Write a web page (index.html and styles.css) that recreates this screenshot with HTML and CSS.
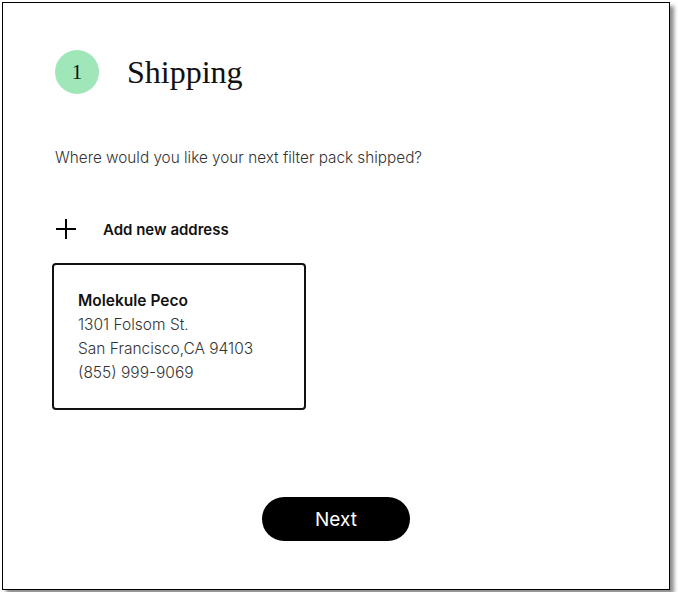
FILE: index.html
```html
<!DOCTYPE html>
<html lang="en">
<head>
<meta charset="utf-8">
<title>Shipping</title>
<link rel="stylesheet" href="styles.css">
</head>
<body>
<div class="frame">
  <div class="header">
    <div class="step">1</div>
    <h1 class="title">Shipping</h1>
  </div>
  <p class="prompt">Where would you like your next filter pack shipped?</p>
  <button class="add" type="button">
    <svg class="plus" width="22" height="22" viewBox="0 0 22 22" aria-hidden="true">
      <path d="M11 1V21M1 11H21" stroke="#000" stroke-width="2" fill="none"/>
    </svg>
    <span>Add new address</span>
  </button>
  <div class="card">
    <div class="name">Molekule Peco</div>
    <div class="line">1301 Folsom St.</div>
    <div class="line">San Francisco,CA 94103</div>
    <div class="line">(855) 999-9069</div>
  </div>
  <div class="actions">
    <button class="next" type="button">Next</button>
  </div>
</div>
</body>
</html>
```

FILE: styles.css
```css
html, body {
  margin: 0;
  padding: 0;
  background: #fff;
}
body {
  padding: 2px;
  font-family: "Inter", "Liberation Sans", sans-serif;
  color: #111;
}
.frame {
  box-sizing: border-box;
  width: 668px;
  height: 588px;
  border: 1px solid #000;
  box-shadow: 4px 4px 4px rgba(0, 0, 0, 0.45);
  padding: 47px 0 0 52px;
  display: flex;
  flex-direction: column;
  align-items: flex-start;
}
.header {
  display: flex;
  align-items: center;
  gap: 28px;
  height: 44px;
}
.step {
  width: 44px;
  height: 44px;
  border-radius: 50%;
  background: #9fe6b9;
  display: flex;
  align-items: center;
  justify-content: center;
  font-family: "Liberation Serif", serif;
  font-size: 21px;
  color: #111;
}
.title {
  margin: 0;
  font-family: "Liberation Serif", serif;
  font-weight: 400;
  font-size: 32px;
  color: #111;
}
.prompt {
  margin: 54px 0 0;
  font-size: 15.3px;
  line-height: 20px;
  font-weight: 300;
  color: #333;
}
.add {
  margin-top: 50px;
  display: flex;
  align-items: center;
  gap: 26px;
  padding: 0;
  border: 0;
  background: none;
  font-family: inherit;
  font-size: 15px;
  font-weight: 600;
  color: #111;
  cursor: pointer;
}
.plus {
  display: block;
}
.card {
  margin: 23px 0 0 -3px;
  width: 254px;
  height: 147px;
  box-sizing: border-box;
  border: 2px solid #111;
  border-radius: 4px;
  padding: 24px 0 0 24px;
  font-size: 15.5px;
  line-height: 24px;
}
.name {
  font-weight: 600;
  color: #111;
}
.line {
  font-weight: 300;
  color: #333;
}
.actions {
  align-self: stretch;
  margin: 87px 0 0 -52px;
  display: flex;
  justify-content: center;
}
.next {
  width: 148px;
  height: 44px;
  border: 0;
  border-radius: 22px;
  background: #000;
  color: #fff;
  font-family: inherit;
  font-size: 19px;
  font-weight: 400;
  cursor: pointer;
}
```
